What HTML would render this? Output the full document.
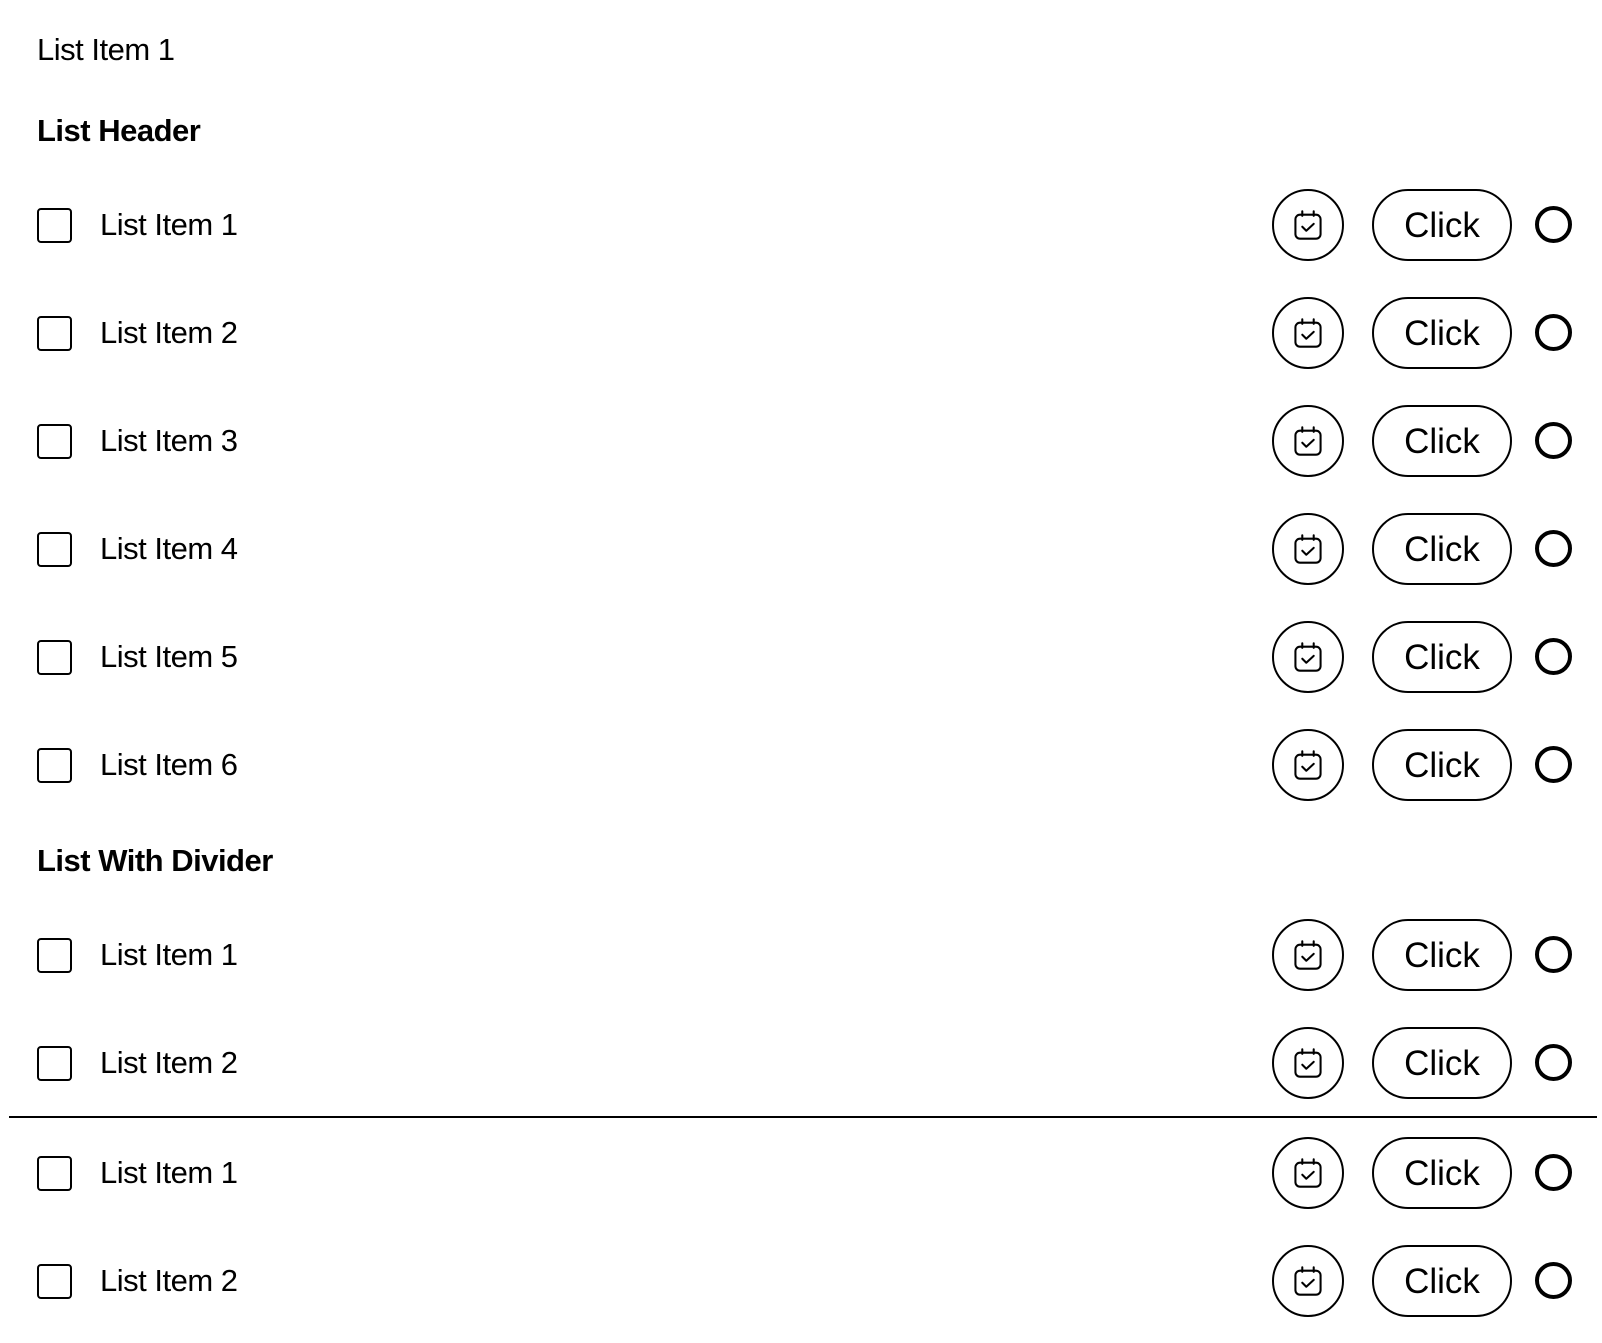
<!DOCTYPE html>
<html><head><style>
body{margin:0;width:1602px;height:1343px;background:#fff;position:relative;font-family:"Liberation Sans",sans-serif;color:#000;overflow:hidden}
.t{position:absolute;left:37px;font-size:31px;line-height:40px;letter-spacing:-0.5px}
.h{font-weight:bold;font-size:31px}
.row{position:absolute;left:0;width:1602px;height:72px}
.cb{position:absolute;left:37px;top:19px;width:31px;height:31px;border:2px solid #000;border-radius:4px}
.lbl{position:absolute;left:100px;top:16px;font-size:31px;line-height:40px;letter-spacing:-0.5px}
.ib{position:absolute;left:1272px;top:0;width:68px;height:68px;border:2px solid #000;border-radius:50%}
.ib svg{position:absolute;left:18px;top:18px}
.btn{position:absolute;left:1372px;top:0;width:136px;height:68px;border:2px solid #000;border-radius:36px;font-size:35px;line-height:70px;text-align:center}
.rd{position:absolute;left:1535px;top:17px;width:29px;height:29px;border:4px solid #000;border-radius:50%}
.div{position:absolute;left:9px;width:1588px;top:1116px;height:2px;background:#000}
</style></head><body>
<div class="t" style="top:30px">List Item 1</div>
<div class="t h" style="top:111px">List Header</div>
<div class="t h" style="top:841px">List With Divider</div>
<div class="div"></div>

<div class="row" style="top:189px"><div class="cb"></div><div class="lbl">List Item 1</div><div class="ib"><svg width="32" height="32" viewBox="0 0 28 28" fill="none" stroke="#000" stroke-width="1.8" stroke-linecap="round" stroke-linejoin="round"><rect x="3" y="5" width="22" height="21" rx="4"/><path d="M9 2v4M19 2v4M9 15.5l3.5 3.5 6.5-6"/></svg></div><div class="btn">Click</div><div class="rd"></div></div>
<div class="row" style="top:297px"><div class="cb"></div><div class="lbl">List Item 2</div><div class="ib"><svg width="32" height="32" viewBox="0 0 28 28" fill="none" stroke="#000" stroke-width="1.8" stroke-linecap="round" stroke-linejoin="round"><rect x="3" y="5" width="22" height="21" rx="4"/><path d="M9 2v4M19 2v4M9 15.5l3.5 3.5 6.5-6"/></svg></div><div class="btn">Click</div><div class="rd"></div></div>
<div class="row" style="top:405px"><div class="cb"></div><div class="lbl">List Item 3</div><div class="ib"><svg width="32" height="32" viewBox="0 0 28 28" fill="none" stroke="#000" stroke-width="1.8" stroke-linecap="round" stroke-linejoin="round"><rect x="3" y="5" width="22" height="21" rx="4"/><path d="M9 2v4M19 2v4M9 15.5l3.5 3.5 6.5-6"/></svg></div><div class="btn">Click</div><div class="rd"></div></div>
<div class="row" style="top:513px"><div class="cb"></div><div class="lbl">List Item 4</div><div class="ib"><svg width="32" height="32" viewBox="0 0 28 28" fill="none" stroke="#000" stroke-width="1.8" stroke-linecap="round" stroke-linejoin="round"><rect x="3" y="5" width="22" height="21" rx="4"/><path d="M9 2v4M19 2v4M9 15.5l3.5 3.5 6.5-6"/></svg></div><div class="btn">Click</div><div class="rd"></div></div>
<div class="row" style="top:621px"><div class="cb"></div><div class="lbl">List Item 5</div><div class="ib"><svg width="32" height="32" viewBox="0 0 28 28" fill="none" stroke="#000" stroke-width="1.8" stroke-linecap="round" stroke-linejoin="round"><rect x="3" y="5" width="22" height="21" rx="4"/><path d="M9 2v4M19 2v4M9 15.5l3.5 3.5 6.5-6"/></svg></div><div class="btn">Click</div><div class="rd"></div></div>
<div class="row" style="top:729px"><div class="cb"></div><div class="lbl">List Item 6</div><div class="ib"><svg width="32" height="32" viewBox="0 0 28 28" fill="none" stroke="#000" stroke-width="1.8" stroke-linecap="round" stroke-linejoin="round"><rect x="3" y="5" width="22" height="21" rx="4"/><path d="M9 2v4M19 2v4M9 15.5l3.5 3.5 6.5-6"/></svg></div><div class="btn">Click</div><div class="rd"></div></div>

<div class="row" style="top:919px"><div class="cb"></div><div class="lbl">List Item 1</div><div class="ib"><svg width="32" height="32" viewBox="0 0 28 28" fill="none" stroke="#000" stroke-width="1.8" stroke-linecap="round" stroke-linejoin="round"><rect x="3" y="5" width="22" height="21" rx="4"/><path d="M9 2v4M19 2v4M9 15.5l3.5 3.5 6.5-6"/></svg></div><div class="btn">Click</div><div class="rd"></div></div>
<div class="row" style="top:1027px"><div class="cb"></div><div class="lbl">List Item 2</div><div class="ib"><svg width="32" height="32" viewBox="0 0 28 28" fill="none" stroke="#000" stroke-width="1.8" stroke-linecap="round" stroke-linejoin="round"><rect x="3" y="5" width="22" height="21" rx="4"/><path d="M9 2v4M19 2v4M9 15.5l3.5 3.5 6.5-6"/></svg></div><div class="btn">Click</div><div class="rd"></div></div>
<div class="row" style="top:1137px"><div class="cb"></div><div class="lbl">List Item 1</div><div class="ib"><svg width="32" height="32" viewBox="0 0 28 28" fill="none" stroke="#000" stroke-width="1.8" stroke-linecap="round" stroke-linejoin="round"><rect x="3" y="5" width="22" height="21" rx="4"/><path d="M9 2v4M19 2v4M9 15.5l3.5 3.5 6.5-6"/></svg></div><div class="btn">Click</div><div class="rd"></div></div>
<div class="row" style="top:1245px"><div class="cb"></div><div class="lbl">List Item 2</div><div class="ib"><svg width="32" height="32" viewBox="0 0 28 28" fill="none" stroke="#000" stroke-width="1.8" stroke-linecap="round" stroke-linejoin="round"><rect x="3" y="5" width="22" height="21" rx="4"/><path d="M9 2v4M19 2v4M9 15.5l3.5 3.5 6.5-6"/></svg></div><div class="btn">Click</div><div class="rd"></div></div>
</body></html>
